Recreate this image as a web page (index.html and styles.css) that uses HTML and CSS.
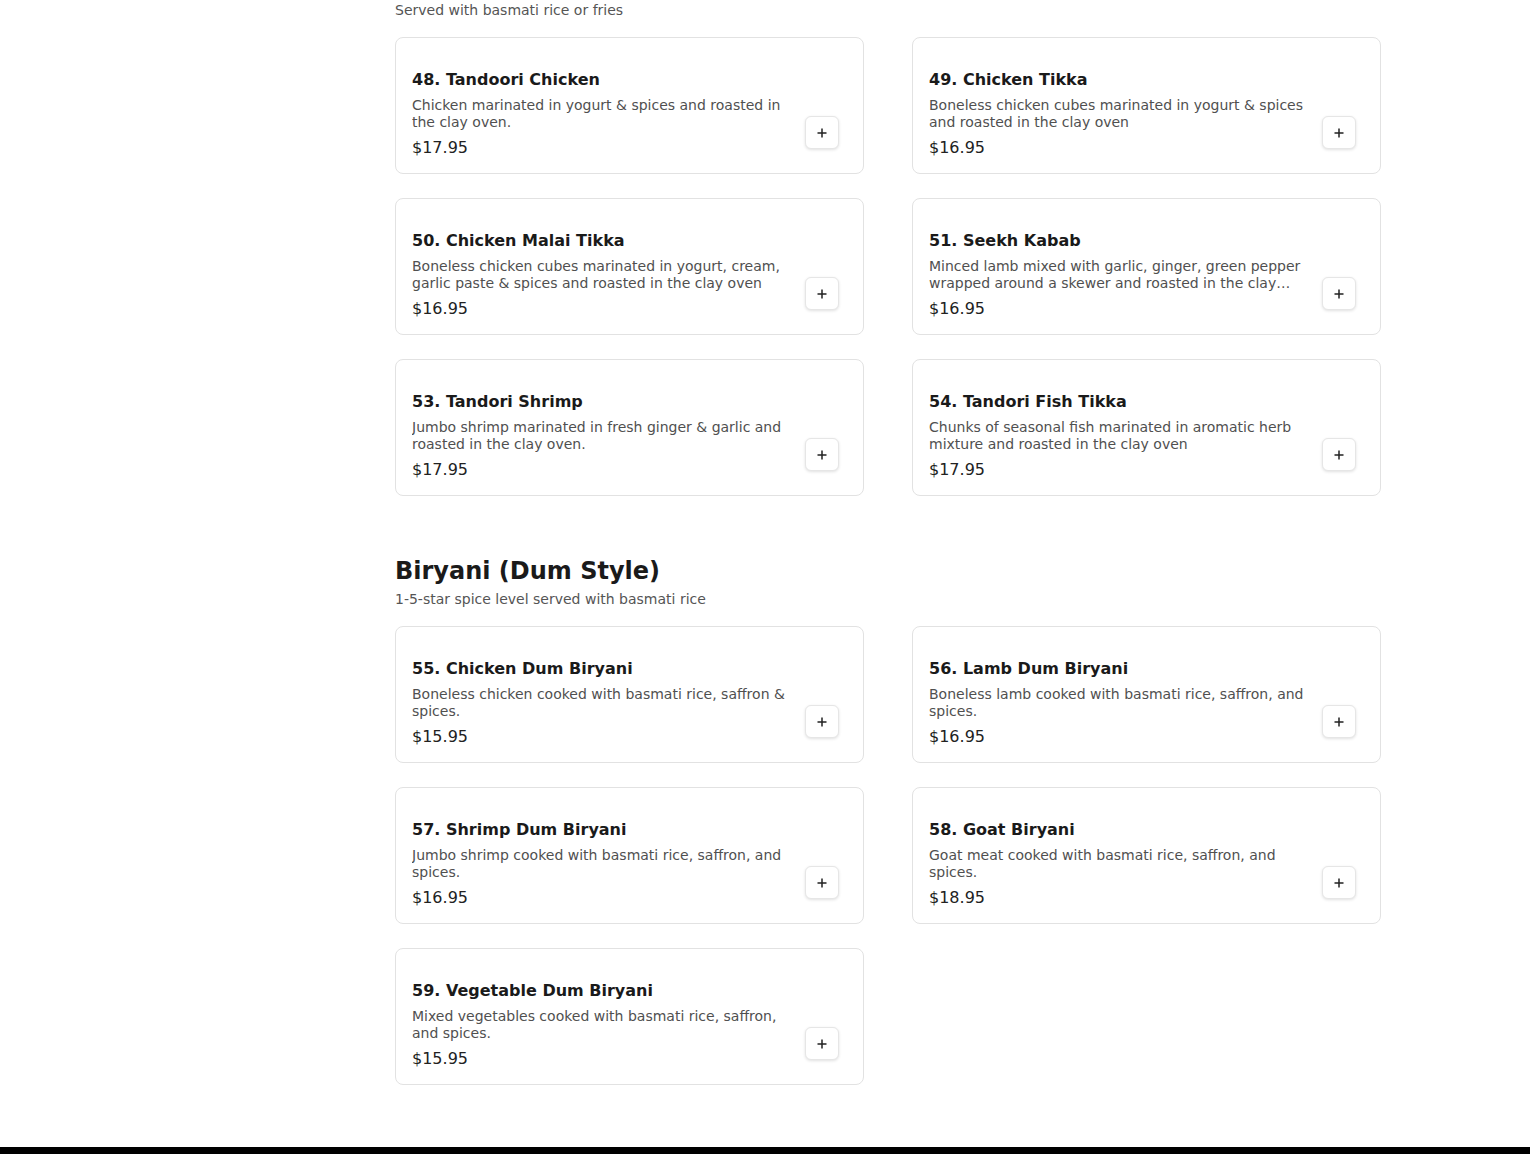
FILE: index.html
```html
<!DOCTYPE html>
<html lang="en">
<head>
<meta charset="utf-8">
<title>Menu</title>
<link rel="stylesheet" href="styles.css">
</head>
<body>
<div class="layout">
  <aside class="sidebar"></aside>

  <main class="menu">
    <section class="category category-cut">
      <p class="category-note">Served with basmati rice or fries</p>
      <div class="items">
        <div class="item">
          <div class="item-info">
            <h3 class="item-name">48. Tandoori Chicken</h3>
            <p class="item-desc">Chicken marinated in yogurt &amp; spices and roasted in the clay oven.</p>
            <div class="item-price">$17.95</div>
          </div>
          <button class="add-btn" aria-label="Add"><svg viewBox="0 0 12 12" width="12" height="12"><path d="M6 1.5v9M1.5 6h9"/></svg></button>
        </div>
        <div class="item">
          <div class="item-info">
            <h3 class="item-name">49. Chicken Tikka</h3>
            <p class="item-desc">Boneless chicken cubes marinated in yogurt &amp; spices and roasted in the clay oven</p>
            <div class="item-price">$16.95</div>
          </div>
          <button class="add-btn" aria-label="Add"><svg viewBox="0 0 12 12" width="12" height="12"><path d="M6 1.5v9M1.5 6h9"/></svg></button>
        </div>
        <div class="item">
          <div class="item-info">
            <h3 class="item-name">50. Chicken Malai Tikka</h3>
            <p class="item-desc">Boneless chicken cubes marinated in yogurt, cream, garlic paste &amp; spices and roasted in the clay oven</p>
            <div class="item-price">$16.95</div>
          </div>
          <button class="add-btn" aria-label="Add"><svg viewBox="0 0 12 12" width="12" height="12"><path d="M6 1.5v9M1.5 6h9"/></svg></button>
        </div>
        <div class="item">
          <div class="item-info">
            <h3 class="item-name">51. Seekh Kabab</h3>
            <p class="item-desc">Minced lamb mixed with garlic, ginger, green pepper wrapped around a skewer and roasted in the clay oven.</p>
            <div class="item-price">$16.95</div>
          </div>
          <button class="add-btn" aria-label="Add"><svg viewBox="0 0 12 12" width="12" height="12"><path d="M6 1.5v9M1.5 6h9"/></svg></button>
        </div>
        <div class="item">
          <div class="item-info">
            <h3 class="item-name">53. Tandori Shrimp</h3>
            <p class="item-desc">Jumbo shrimp marinated in fresh ginger &amp; garlic and roasted in the clay oven.</p>
            <div class="item-price">$17.95</div>
          </div>
          <button class="add-btn" aria-label="Add"><svg viewBox="0 0 12 12" width="12" height="12"><path d="M6 1.5v9M1.5 6h9"/></svg></button>
        </div>
        <div class="item">
          <div class="item-info">
            <h3 class="item-name">54. Tandori Fish Tikka</h3>
            <p class="item-desc">Chunks of seasonal fish marinated in aromatic herb mixture and roasted in the clay oven</p>
            <div class="item-price">$17.95</div>
          </div>
          <button class="add-btn" aria-label="Add"><svg viewBox="0 0 12 12" width="12" height="12"><path d="M6 1.5v9M1.5 6h9"/></svg></button>
        </div>
      </div>
    </section>

    <section class="category">
      <h2 class="category-title">Biryani (Dum Style)</h2>
      <p class="category-note">1-5-star spice level served with basmati rice</p>
      <div class="items">
        <div class="item">
          <div class="item-info">
            <h3 class="item-name">55. Chicken Dum Biryani</h3>
            <p class="item-desc">Boneless chicken cooked with basmati rice, saffron &amp; spices.</p>
            <div class="item-price">$15.95</div>
          </div>
          <button class="add-btn" aria-label="Add"><svg viewBox="0 0 12 12" width="12" height="12"><path d="M6 1.5v9M1.5 6h9"/></svg></button>
        </div>
        <div class="item">
          <div class="item-info">
            <h3 class="item-name">56. Lamb Dum Biryani</h3>
            <p class="item-desc">Boneless lamb cooked with basmati rice, saffron, and spices.</p>
            <div class="item-price">$16.95</div>
          </div>
          <button class="add-btn" aria-label="Add"><svg viewBox="0 0 12 12" width="12" height="12"><path d="M6 1.5v9M1.5 6h9"/></svg></button>
        </div>
        <div class="item">
          <div class="item-info">
            <h3 class="item-name">57. Shrimp Dum Biryani</h3>
            <p class="item-desc">Jumbo shrimp cooked with basmati rice, saffron, and spices.</p>
            <div class="item-price">$16.95</div>
          </div>
          <button class="add-btn" aria-label="Add"><svg viewBox="0 0 12 12" width="12" height="12"><path d="M6 1.5v9M1.5 6h9"/></svg></button>
        </div>
        <div class="item">
          <div class="item-info">
            <h3 class="item-name">58. Goat Biryani</h3>
            <p class="item-desc">Goat meat cooked with basmati rice, saffron, and spices.</p>
            <div class="item-price">$18.95</div>
          </div>
          <button class="add-btn" aria-label="Add"><svg viewBox="0 0 12 12" width="12" height="12"><path d="M6 1.5v9M1.5 6h9"/></svg></button>
        </div>
        <div class="item">
          <div class="item-info">
            <h3 class="item-name">59. Vegetable Dum Biryani</h3>
            <p class="item-desc">Mixed vegetables cooked with basmati rice, saffron, and spices.</p>
            <div class="item-price">$15.95</div>
          </div>
          <button class="add-btn" aria-label="Add"><svg viewBox="0 0 12 12" width="12" height="12"><path d="M6 1.5v9M1.5 6h9"/></svg></button>
        </div>
      </div>
    </section>
  </main>
</div>

<footer class="site-footer"></footer>
</body>
</html>
```

FILE: styles.css
```css
body
{
  margin: 0;
  background: #fff;
  color: #1a1a1a;
  font-family: "DejaVu Sans", "Noto Sans", sans-serif;
}

.layout
{
  display: grid;
  grid-template-columns: 395px 986px;
}

.menu
{
  padding-bottom: 62px;
}

/* category block: title, note, grid of items */
.category + .category { margin-top: 59px; }

.category-title
{
  margin: 0;
  font-size: 24px;
  line-height: 32px;
  font-weight: 700;
  color: #1a1a1a;
}

.category-note
{
  margin: 2px 0 17px;
  font-size: 14px;
  line-height: 20px;
  color: #555;
}

.category-cut .category-note { margin: 0 0 17px; }

.items
{
  display: grid;
  grid-template-columns: 1fr 1fr;
  column-gap: 48px;
  row-gap: 24px;
}

.item
{
  display: flex;
  align-items: flex-end;
  gap: 16px;
  padding: 32px 16px 16px;
  border: 1px solid #e2e2e2;
  border-radius: 8px;
  background: #fff;
}

.item-info
{
  flex: 1;
  min-width: 0;
}

.item-name
{
  margin: 0 0 8px;
  font-size: 16px;
  line-height: 19px;
  font-weight: 700;
  color: #1a1a1a;
}

.item-desc
{
  margin: 0;
  font-size: 14px;
  line-height: 17px;
  color: #505050;
  display: -webkit-box;
  -webkit-box-orient: vertical;
  -webkit-line-clamp: 2;
  overflow: hidden;
}

.item-price
{
  margin-top: 7px;
  font-size: 16px;
  line-height: 19px;
  color: #222;
}

.add-btn
{
  flex: none;
  display: flex;
  align-items: center;
  justify-content: center;
  width: 34px;
  height: 33px;
  margin: 0 8px 8px 0;
  padding: 0;
  border: 1px solid #e6e6e6;
  border-radius: 6px;
  background: #fff;
  box-shadow: 0 1px 3px rgba(0,0,0,.12);
  cursor: pointer;
}

.add-btn svg path
{
  fill: none;
  stroke: #222;
  stroke-width: 1.5;
}

.site-footer
{
  height: 240px;
  background: #000;
}
```
